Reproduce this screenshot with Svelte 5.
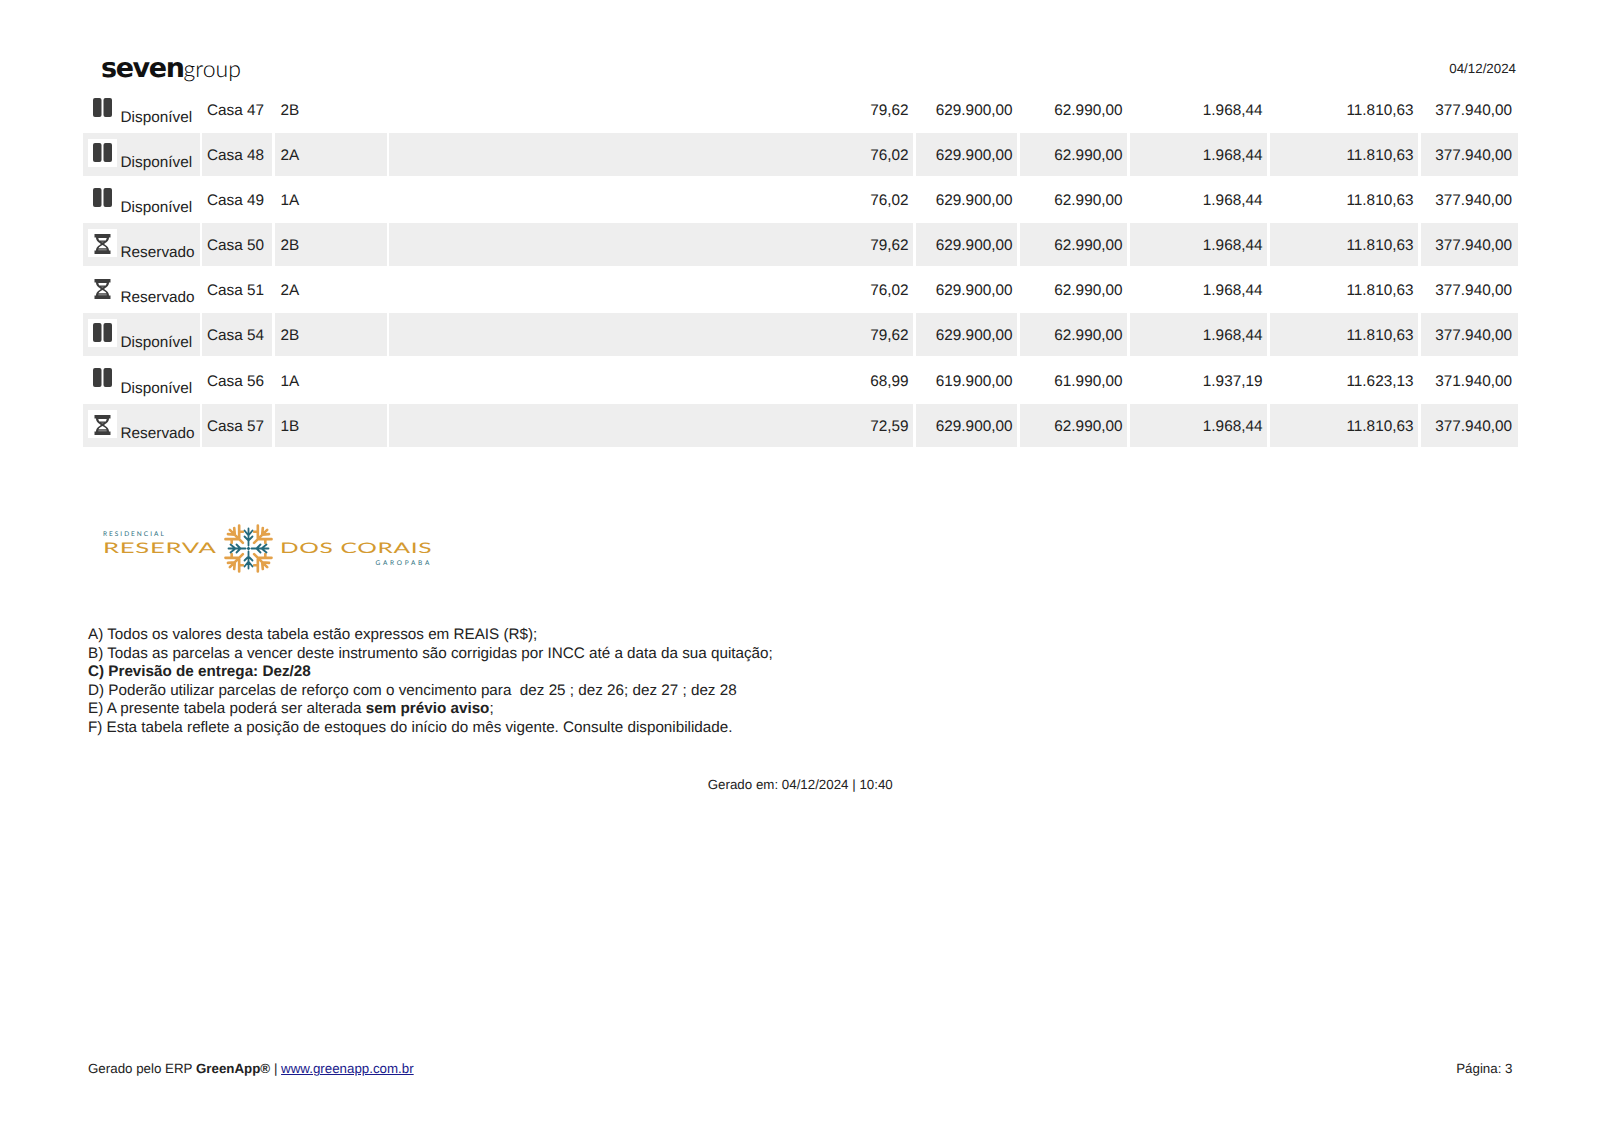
<script>
  const rows = [
    ['d','Casa 47','2B','79,62','629.900,00','62.990,00','1.968,44','11.810,63','377.940,00'],
    ['d','Casa 48','2A','76,02','629.900,00','62.990,00','1.968,44','11.810,63','377.940,00'],
    ['d','Casa 49','1A','76,02','629.900,00','62.990,00','1.968,44','11.810,63','377.940,00'],
    ['r','Casa 50','2B','79,62','629.900,00','62.990,00','1.968,44','11.810,63','377.940,00'],
    ['r','Casa 51','2A','76,02','629.900,00','62.990,00','1.968,44','11.810,63','377.940,00'],
    ['d','Casa 54','2B','79,62','629.900,00','62.990,00','1.968,44','11.810,63','377.940,00'],
    ['d','Casa 56','1A','68,99','619.900,00','61.990,00','1.937,19','11.623,13','371.940,00'],
    ['r','Casa 57','1B','72,59','629.900,00','62.990,00','1.968,44','11.810,63','377.940,00'],
  ];
  const arms = [0, 90, 180, 270];
  const diag = [45, 135, 225, 315];
</script>

<div class="page">
  <header class="top">
    <div class="brand"><span class="seven">seven</span><span class="group">group</span></div>
    <div class="date">04/12/2024</div>
  </header>

  <div class="table">
    {#each rows as r, i}
      <div class="row" class:odd={i % 2 === 1}>
        <div class="cell status">
          <span class="ico">
            {#if r[0] === 'd'}
              <svg class="pause" width="19" height="19" viewBox="0 0 19 19"><rect x="0" y="0" width="8.500" height="19" rx="2"/><rect x="10.500" y="0" width="8.500" height="19" rx="2"/></svg>
            {:else}
              <svg class="glass" width="17" height="20" viewBox="0 0 16 20">
                <path d="M0 0H16V3.500H14.500C14.500 7 11.500 8.500 9.500 10C11.500 11.500 14.500 13 14.500 16.500H16V20H0V16.500H1.500C1.500 13 4.500 11.500 6.500 10C4.500 8.500 1.500 7 1.500 3.500H0Z"/>
                <path class="hole" d="M3.800 4H12.200C12.100 5 11.800 5.800 11.200 6.500H4.800C4.200 5.800 3.900 5 3.800 4ZM8 11C6.200 12.200 4.600 13 4 14.200H12C11.400 13 9.800 12.200 8 11Z"/>
                <path class="sand" d="M6.200 7.600H9.800C9.200 8.200 8.600 8.600 8 9C7.400 8.600 6.800 8.200 6.200 7.600ZM3.800 14.800H12.200V16.400H3.800Z"/>
              </svg>
            {/if}
          </span>
          <span class="st">{r[0] === 'd' ? 'Disponível' : 'Reservado'}</span>
        </div>
        <div class="cell">{r[1]}</div>
        <div class="cell c3">{r[2]}</div>
        {#each r.slice(3) as v, j}
          <div class="cell num" class:last={j === 5}>{v}</div>
        {/each}
      </div>
    {/each}
  </div>

  <div class="logo">
    <div class="l-left">
      <span class="resid">RESIDENCIAL</span>
      <span class="big">RESERVA</span>
    </div>
    <svg class="flake" width="47" height="47" viewBox="-23.500 -23.500 47 47">
      {#each diag as a}
        <g transform="rotate({a}) scale(0.88)" stroke="#e3a14a" stroke-width="3" fill="none" stroke-linecap="round">
          <path d="M0 -9V-30M0 -15L-11 -26M0 -15L11 -26M0 -22L-5 -28M0 -22L5 -28M-6 -21L-9 -18M6 -21L9 -18"/>
        </g>
      {/each}
      {#each arms as a}
        <g transform="rotate({a})" stroke="#24697c" stroke-width="1.800" fill="none" stroke-linecap="round">
          <path d="M0 -3V-20M0 -8L-4 -12M0 -8L4 -12M0 -13L-4 -18M0 -13L4 -18"/>
        </g>
      {/each}
      <rect x="-1.500" y="-1.500" width="3" height="3" fill="#24697c" transform="rotate(45)"/>
    </svg>
    <div class="l-right">
      <span class="big">DOS CORAIS</span>
      <span class="garo">GAROPABA</span>
    </div>
  </div>

  <div class="notes">
    <div>A) Todos os valores desta tabela estão expressos em REAIS (R$);</div>
    <div>B) Todas as parcelas a vencer deste instrumento são corrigidas por INCC até a data da sua quitação;</div>
    <div><b>C) Previsão de entrega: Dez/28</b></div>
    <div>D) Poderão utilizar parcelas de reforço com o vencimento para &nbsp;dez 25 ; dez 26; dez 27 ; dez 28</div>
    <div>E) A presente tabela poderá ser alterada <b>sem prévio aviso</b>;</div>
    <div>F) Esta tabela reflete a posição de estoques do início do mês vigente. Consulte disponibilidade.</div>
  </div>

  <div class="gen">Gerado em: 04/12/2024 | 10:40</div>

  <footer class="foot">
    <div>Gerado pelo ERP <b>GreenApp®</b> | <a href="#top">www.greenapp.com.br</a></div>
    <div>Página: 3</div>
  </footer>
</div>

<style>
  :global(body) { margin: 0; background: #fff; }
  .page {
    width: 1600px;
    height: 1132px;
    box-sizing: border-box;
    padding: 48px 82px 56px 82.500px;
    font-family: "Liberation Sans", Arial, sans-serif;
    text-rendering: geometricPrecision;
    color: #222;
    display: flex;
    flex-direction: column;
    overflow: hidden;
  }
  .top {
    display: flex;
    justify-content: space-between;
    align-items: center;
    height: 40px;
    padding: 0 2px 0 18.500px;
  }
  .brand { display: flex; align-items: baseline; color: #111; line-height: 1; }
  .seven { font-family: "DejaVu Sans", sans-serif; font-weight: 700; font-size: 27px; letter-spacing: -1.400px; }
  .group { font-family: Lato, sans-serif; font-weight: 300; font-size: 23px; margin-left: 0; color: #000; }
  .date { font-size: 13.330px; }
  .table { width: 1435.500px; display: flex; flex-direction: column; gap: 2.100px; }
  .row {
    display: grid;
    grid-template-columns: 117px 70px 112px 524px 101.500px 107.500px 137.500px 148.500px 97.500px;
    column-gap: 2.500px;
    height: 43px;
  }
  .row.odd .cell { background: #eeeeee; }
  .cell {
    font-size: 15.330px;
    line-height: 45px;
    padding: 0 5px 0 5px;
    white-space: nowrap;
    box-sizing: border-box;
    height: 43px;
  }
  .c3 { padding-left: 6px; }
  .num { text-align: right; padding-right: 4.500px; }
  .num.last { padding-right: 6px; }
  .status { position: relative; padding: 0; }
  .ico {
    position: absolute;
    left: 5px;
    top: 6px;
    width: 29px;
    height: 28px;
    display: flex;
    align-items: center;
    justify-content: center;
  }
  .row.odd .ico { background: #fff; }
  .ico svg { fill: #3c3c3c; }
  .ico .hole { fill: #fff; }
  .ico .sand { fill: #777; }
  .pause { margin-top: -2px; }
  .glass { margin-top: 2px; }
  .st { position: absolute; left: 38px; top: 7px; }
  .logo {
    display: flex;
    align-items: center;
    margin-top: 78px;
    margin-left: 20.500px;
    height: 47px;
    color: #d49a30;
  }
  .flake { margin: 0 8px 0 10px; overflow: visible; }
  .l-left { width: 112px; display: flex; flex-direction: column; margin-top: -11px; }
  .l-right { width: 152px; display: flex; flex-direction: column; margin-top: 14px; }
  .big {
    font-family: Lato, sans-serif;
    font-weight: 400;
    font-size: 14.500px;
    letter-spacing: 0.4px;
    line-height: 12px;
    transform: scaleX(1.770);
    transform-origin: left;
    display: block;
    white-space: nowrap;
  }
  .l-right .big { transform: scaleX(1.690); }
  .resid { font-size: 6.500px; letter-spacing: 2px; color: #2c6f80; font-family: Lato, sans-serif; margin-bottom: 4px; line-height: 8px; white-space: nowrap; }
  .garo { font-size: 6.500px; letter-spacing: 2.700px; color: #2c6f80; text-align: right; font-family: Lato, sans-serif; margin-top: 5px; line-height: 7px; white-space: nowrap; }
  .notes {
    margin-top: 54.400px;
    margin-left: 5.500px;
    font-size: 15.240px;
    line-height: 18.600px;
  }
  .gen { margin-top: 39px; text-align: center; font-size: 13.330px; width: 1435.500px; }
  .foot {
    margin-top: auto;
    padding: 0 5.500px;
    display: flex;
    justify-content: space-between;
    font-size: 13.330px;
  }
  .foot a { color: #1a1a8c; text-decoration: underline; }
</style>
